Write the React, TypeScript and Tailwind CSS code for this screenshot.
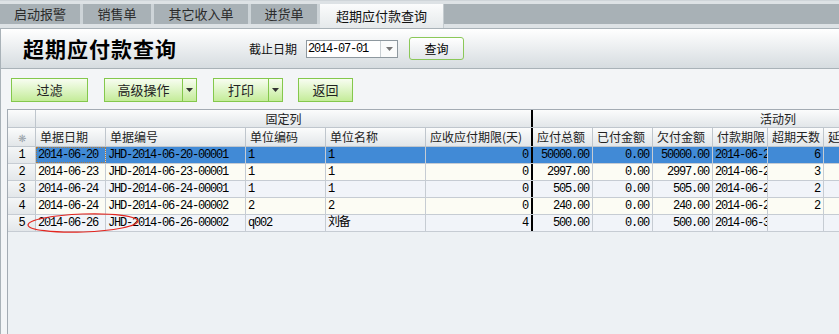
import React from "react";

const CJK = "font-['Noto_Sans_CJK_SC',sans-serif]";
const MONO = "font-['Liberation_Mono','Noto_Sans_CJK_SC',monospace] text-[12px] tracking-[-1.2px]";

const tabs = [
  { label: "启动报警", w: "w-[83px]" },
  { label: "销售单", w: "w-[71px]" },
  { label: "其它收入单", w: "w-[97px]" },
  { label: "进货单", w: "w-[69px]" },
];

type Row = {
  date: string;
  bill: string;
  code: string;
  name: string;
  term: string;
  total: string;
  paid: string;
  owed: string;
  due: string;
  over: string;
};

const rows: Row[] = [
  { date: "2014-06-20", bill: "JHD-2014-06-20-00001", code: "1", name: "1", term: "0", total: "50000.00", paid: "0.00", owed: "50000.00", due: "2014-06-20", over: "6" },
  { date: "2014-06-23", bill: "JHD-2014-06-23-00001", code: "1", name: "1", term: "0", total: "2997.00", paid: "0.00", owed: "2997.00", due: "2014-06-23", over: "3" },
  { date: "2014-06-24", bill: "JHD-2014-06-24-00001", code: "1", name: "1", term: "0", total: "505.00", paid: "0.00", owed: "505.00", due: "2014-06-24", over: "2" },
  { date: "2014-06-24", bill: "JHD-2014-06-24-00002", code: "2", name: "2", term: "0", total: "240.00", paid: "0.00", owed: "240.00", due: "2014-06-24", over: "2" },
  { date: "2014-06-26", bill: "JHD-2014-06-26-00002", code: "q002", name: "刘备", term: "4", total: "500.00", paid: "0.00", owed: "500.00", due: "2014-06-30", over: "" },
];

// 列定义：宽度包含右边框
const cols: { key: keyof Row; title: string; w: string; right?: boolean; split?: boolean }[] = [
  { key: "date", title: "单据日期", w: "w-[70px]" },
  { key: "bill", title: "单据编号", w: "w-[140px]" },
  { key: "code", title: "单位编码", w: "w-[80px]" },
  { key: "name", title: "单位名称", w: "w-[100px]" },
  { key: "term", title: "应收应付期限(天)", w: "w-[107px]", right: true, split: true },
  { key: "total", title: "应付总额", w: "w-[60px]", right: true },
  { key: "paid", title: "已付金额", w: "w-[60px]", right: true },
  { key: "owed", title: "欠付金额", w: "w-[60px]", right: true },
  { key: "due", title: "付款期限", w: "w-[55px]" },
  { key: "over", title: "超期天数", w: "w-[56px]", right: true },
];

function GreenButton({ label, w, arrow }: { label: string; w: string; arrow?: boolean }) {
  return (
    <div className="flex h-[24px] border border-[#84c84c] bg-linear-to-b from-[#f8fdf1] to-[#c4ec98]">
      <div className={`${w} flex items-center justify-center text-[13px] text-[#222] ${CJK}`}>{label}</div>
      {arrow && (
        <div className="w-[14px] border-l border-[#84c84c] flex items-center justify-center">
          <svg width="7" height="4" viewBox="0 0 7 4">
            <path d="M0 0h7L3.5 4z" fill="#333" />
          </svg>
        </div>
      )}
    </div>
  );
}

export default function App() {
  return (
    <div className="w-[839px] h-[334px] overflow-hidden flex flex-col bg-[#f3f5f7]">
      {/* 标签栏 */}
      <div className="pt-[3px] pb-[4px] bg-[#dde2e5] border-t border-[#cfd5d9]">
        <div className="flex h-[20px] bg-[#a8b1b6]">
          {tabs.map((t) => (
            <div
              key={t.label}
              className={`${t.w} border-r-[3px] border-[#cdd4d8] flex items-center justify-center text-[13px] text-[#2a2a2a] ${CJK}`}
            >
              {t.label}
            </div>
          ))}
          <div className={`w-[124px] h-[24px] bg-linear-to-b from-[#fbfcfc] to-[#e5e9eb] border-r border-[#c5ccd0] flex items-center justify-center text-[13px] text-[#111] ${CJK}`}>
            超期应付款查询
          </div>
        </div>
      </div>

      {/* 标题区 */}
      <div className="h-[41px] flex items-center border-t border-b border-l border-[#a9b2b8] bg-linear-to-b from-white to-[#d6dce0]">
        <div className={`w-[248px] pl-[22px] text-[21px] font-bold tracking-[1px] text-black ${CJK}`}>超期应付款查询</div>
        <div className={`text-[12px] text-[#111] ${CJK}`}>截止日期</div>
        <div className="ml-[9px] w-[92px] h-[18px] flex border border-[#8e989f] bg-white">
          <div className={`flex-1 flex items-center pl-[1px] text-black ${MONO}`}>2014-07-01</div>
          <div className="w-[17px] border-l border-[#c9cfd3] flex items-center justify-center bg-[#fafbfb]">
            <svg width="7" height="4" viewBox="0 0 7 4">
              <path d="M0 0h7L3.5 4z" fill="#777" />
            </svg>
          </div>
        </div>
        <div className={`ml-[11px] w-[55px] h-[23px] rounded-[3px] border border-[#8bc858] bg-linear-to-b from-white to-[#e3e7ea] flex items-center justify-center text-[12px] text-black ${CJK}`}>
          查询
        </div>
      </div>

      {/* 工具栏 */}
      <div className="flex items-center gap-[16px] pl-[10px] pt-[9px] pb-[7px] border-l border-[#a9b2b8]">
        <GreenButton label="过滤" w="w-[75px]" />
        <GreenButton label="高级操作" w="w-[77px]" arrow />
        <div className="flex gap-[15px]">
          <GreenButton label="打印" w="w-[54px]" arrow />
          <GreenButton label="返回" w="w-[53px]" />
        </div>
      </div>

      {/* 表格 */}
      <div className="flex-1 flex border-l border-[#a9b2b8] pl-[6px] min-h-0">
        <div className="relative flex-1 border-l border-t border-[#a3abb3] bg-[#edf1f4] overflow-hidden">
          <div className="w-[1100px]">
            {/* 分组表头 */}
            <div className={`flex h-[18px] border-b border-[#bfc6cd] bg-linear-to-b from-[#fbfcfc] to-[#e2e6e9] text-[12px] text-[#222] ${CJK}`}>
              <div className="w-[28px] border-r border-[#bfc6cd]" />
              <div className="w-[497px] border-r-2 border-black flex items-center justify-center">固定列</div>
              <div className="w-[491px] border-r border-[#bfc6cd] flex items-center justify-center">活动列</div>
            </div>
            {/* 列表头 */}
            <div className={`flex h-[19px] border-b border-[#bfc6cd] bg-linear-to-b from-[#fbfcfc] to-[#e2e6e9] text-[12px] text-[#222] ${CJK}`}>
              <div className="w-[28px] border-r border-[#bfc6cd] flex items-center justify-center text-[10px] text-[#9aa3aa]">❋</div>
              {cols.map((c) => (
                <div
                  key={c.key}
                  className={`${c.w} shrink-0 flex items-center pl-[4px] whitespace-nowrap overflow-hidden ${c.split ? "border-r-2 border-black" : "border-r border-[#bfc6cd]"}`}
                >
                  {c.title}
                </div>
              ))}
              <div className="w-[70px] shrink-0 border-r border-[#bfc6cd] flex items-center pl-[4px] whitespace-nowrap">延期天数</div>
            </div>
            {/* 数据行 */}
            {rows.map((r, i) => {
              const selected = i === 0;
              const bg = selected ? "bg-[#418ad6]" : i % 2 === 1 ? "bg-[#fcfcf4]" : "bg-[#f1f4f9]";
              return (
                <div key={i} className={`flex h-[17px] border-b border-[#c6ccd3] text-black ${MONO}`}>
                  <div className={`w-[28px] shrink-0 border-r border-[#bfc6cd] bg-linear-to-b from-[#f4f6f7] to-[#e3e7ea] flex items-center justify-center`}>
                    {i + 1}
                  </div>
                  {cols.map((c) => (
                    <div
                      key={c.key}
                      className={`${c.w} shrink-0 ${bg} flex items-center whitespace-nowrap overflow-hidden ${c.right ? "justify-end pr-[3px]" : "pl-[2px]"} ${c.split ? "border-r-2 border-black" : "border-r border-[#c6ccd3]"} ${selected && c.key === "date" ? "outline-1 outline-dotted outline-[#b07a3a] -outline-offset-1" : ""}`}
                    >
                      {r[c.key]}
                    </div>
                  ))}
                  <div className={`w-[70px] shrink-0 ${bg} border-r border-[#c6ccd3]`} />
                </div>
              );
            })}
          </div>

          {/* 红色圈注 */}
          <svg className="absolute left-0 top-0 pointer-events-none" width="200" height="140">
            <ellipse cx="75" cy="113" rx="55" ry="9" fill="none" stroke="#e3261f" strokeWidth="1.2" transform="rotate(-2 75 113)" />
          </svg>
        </div>
      </div>
    </div>
  );
}
